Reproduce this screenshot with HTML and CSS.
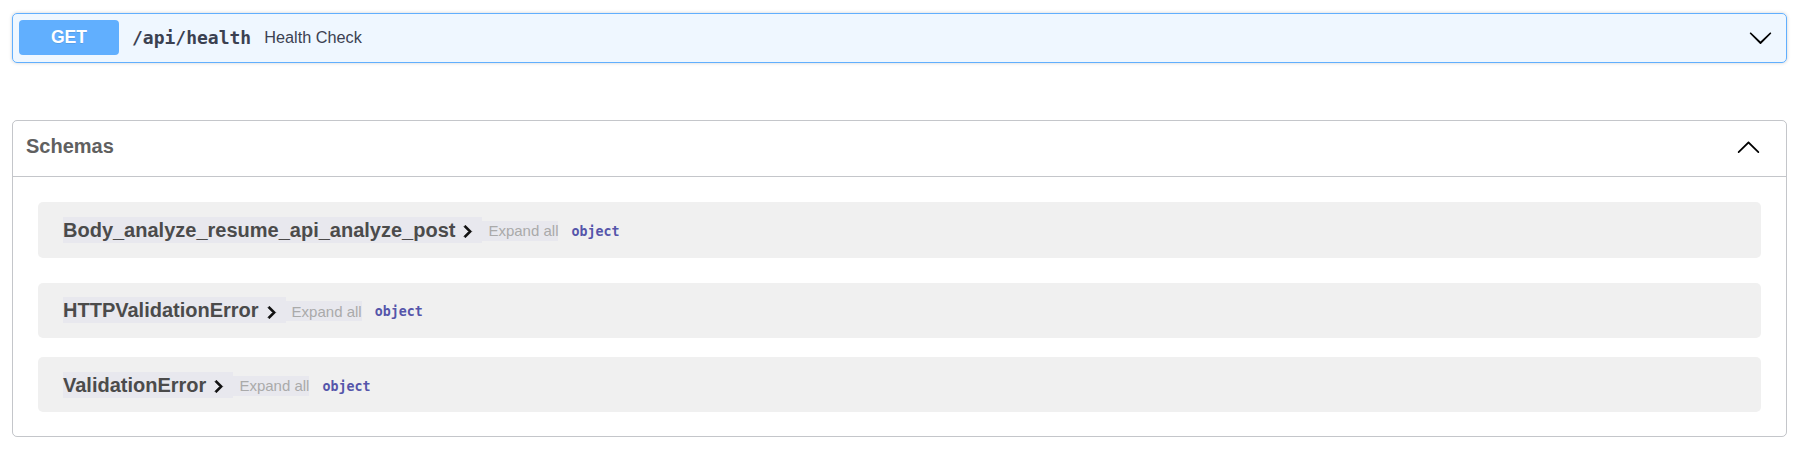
FILE: index.html
```html
<!DOCTYPE html>
<html lang="en">
<head>
<meta charset="utf-8">
<title>API docs</title>
<link rel="stylesheet" href="styles.css">
</head>
<body>
<div class="page">
  <div class="opblock opblock-get">
    <div class="opblock-summary">
      <span class="method">GET</span>
      <span class="path">/api/health</span>
      <span class="desc">Health Check</span>
      <svg class="big-arrow" viewBox="0 0 20 20" width="25" height="25"><path d="M17.418 6.109c.272-.268.709-.268.979 0s.271.701 0 .969l-7.908 7.83c-.27.268-.707.268-.979 0l-7.908-7.83c-.27-.268-.27-.701 0-.969.271-.268.709-.268.979 0L10 13.25l7.418-7.141z"/></svg>
    </div>
  </div>

  <section class="models">
    <div class="models-head">
      <h4 class="models-title">Schemas</h4>
      <svg class="big-arrow" viewBox="0 0 20 20" width="25" height="25"><path d="M17.418 14.908c.272.268.709.268.979 0s.271-.701 0-.969l-7.908-7.83c-.27-.268-.707-.268-.979 0l-7.908 7.83c-.27.268-.27.701 0 .969.271.268.709.268.979 0L10 7.767l7.418 7.141z"/></svg>
    </div>
    <div class="models-body">
      <div class="model-container">
        <span class="model-title"><span class="model-name">Body_analyze_resume_api_analyze_post</span><svg class="small-arrow" viewBox="0 0 24 24" width="25" height="25"><path d="M10 6L8.59 7.41 13.17 12l-4.58 4.59L10 18l6-6z"/></svg></span>
        <span class="expand">Expand all</span>
        <span class="type">object</span>
      </div>
      <div class="model-container">
        <span class="model-title"><span class="model-name">HTTPValidationError</span><svg class="small-arrow" viewBox="0 0 24 24" width="25" height="25"><path d="M10 6L8.59 7.41 13.17 12l-4.58 4.59L10 18l6-6z"/></svg></span>
        <span class="expand">Expand all</span>
        <span class="type">object</span>
      </div>
      <div class="model-container">
        <span class="model-title"><span class="model-name">ValidationError</span><svg class="small-arrow" viewBox="0 0 24 24" width="25" height="25"><path d="M10 6L8.59 7.41 13.17 12l-4.58 4.59L10 18l6-6z"/></svg></span>
        <span class="expand">Expand all</span>
        <span class="type">object</span>
      </div>
    </div>
  </section>
</div>
</body>
</html>
```

FILE: styles.css
```css
html, body {
  margin: 0;
  padding: 0;
  background: #ffffff;
}

.page {
  padding: 13px 26px 0 12px;
  font-family: "Liberation Sans", Arial, sans-serif;
  color: #3b4151;
}

.opblock {
  border: 1px solid #61affe;
  background: rgba(97, 175, 254, 0.1);
  border-radius: 5px;
  box-shadow: 0 0 3.75px rgba(0, 0, 0, 0.19);
}

.opblock-summary {
  display: flex;
  align-items: center;
  padding: 6px 6px 7px 6px;
}

.method {
  width: 100px;
  height: 35px;
  display: flex;
  align-items: center;
  justify-content: center;
  background: #61affe;
  color: #ffffff;
  font-weight: 700;
  font-size: 17.5px;
  border-radius: 4px;
  text-shadow: 0 1px 0 rgba(0, 0, 0, 0.1);
}

.path {
  font-family: "DejaVu Sans Mono", monospace;
  font-weight: 700;
  font-size: 18px;
  color: #3b4151;
  padding: 0 13px;
}

.desc {
  flex: 1;
  font-size: 16.25px;
  color: #3b4151;
}

.big-arrow {
  display: block;
  flex: none;
  fill: #000000;
}

.opblock-summary .big-arrow {
  margin-right: 7px;
}

.models {
  margin-top: 57px;
  border: 1px solid rgba(59, 65, 81, 0.3);
  border-radius: 5px;
}

.models-head {
  height: 56px;
  box-sizing: border-box;
  display: flex;
  align-items: center;
  padding: 0 25px 5px 13px;
  border-bottom: 1px solid rgba(59, 65, 81, 0.3);
}

.models-title {
  flex: 1;
  margin: 0;
  font-size: 20px;
  font-weight: 700;
  color: #606060;
}

.models-body {
  padding: 25px 25px 24px 25px;
}

.model-container {
  height: 55.5px;
  box-sizing: border-box;
  display: flex;
  align-items: center;
  padding: 0 25px;
  background: #f0f0f0;
  border-radius: 5px;
  margin-bottom: 18.75px;
}

.model-container:first-child {
  margin-bottom: 25px;
}

.model-container:last-child {
  margin-bottom: 0;
}

.model-title {
  display: flex;
  align-items: center;
  height: 26px;
  background: #e8e8ee;
  padding-right: 2px;
}

.model-name {
  font-size: 20px;
  font-weight: 700;
  color: #4b4b4b;
  line-height: 26px;
}

.small-arrow {
  display: block;
  fill: #111111;
  stroke: #111111;
  stroke-width: 0.7;
  position: relative;
  top: 2px;
}

.expand {
  height: 20px;
  display: flex;
  align-items: center;
  padding-left: 6px;
  background: #e8e8ee;
  color: #aaaaaa;
  font-size: 15px;
  margin-top: 2px;
}

.type {
  margin-left: 13px;
  font-family: "DejaVu Sans Mono", monospace;
  font-weight: 700;
  font-size: 13.3px;
  color: #55a;
  margin-top: 3px;
}
```
